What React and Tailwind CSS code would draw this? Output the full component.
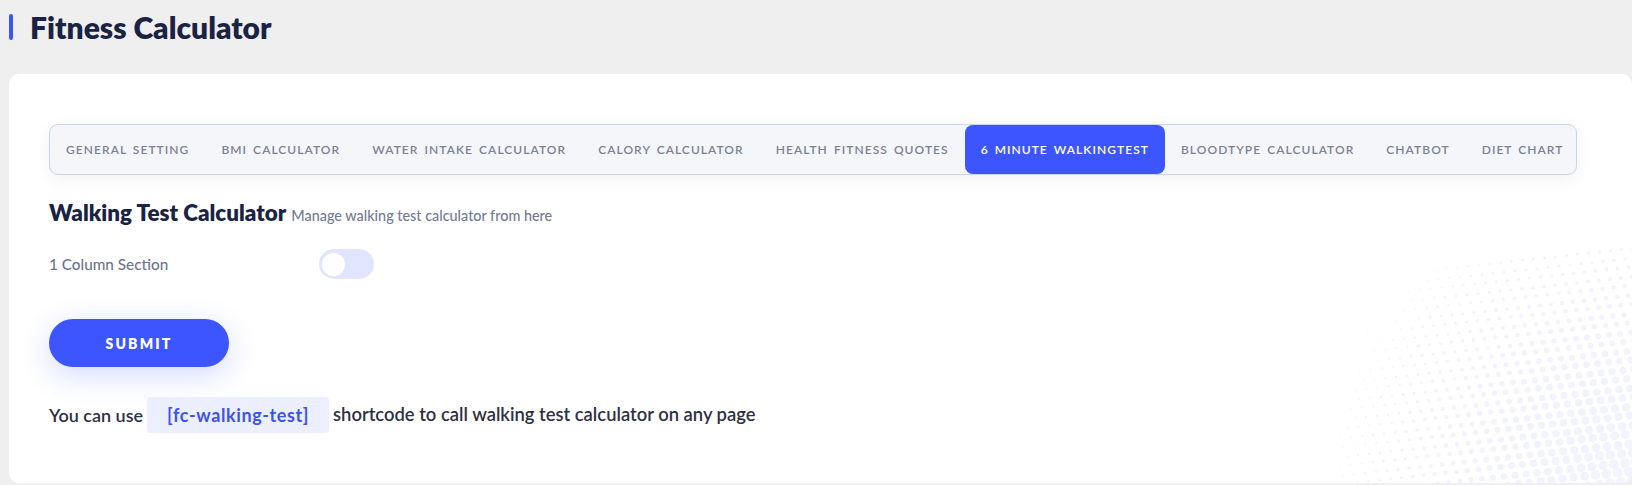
import React from "react";

const tabs = [
  "GENERAL SETTING",
  "BMI CALCULATOR",
  "WATER INTAKE CALCULATOR",
  "CALORY CALCULATOR",
  "HEALTH FITNESS QUOTES",
  "6 MINUTE WALKINGTEST",
  "BLOODTYPE CALCULATOR",
  "CHATBOT",
  "DIET CHART",
];

function Dots() {
  const W = 330;
  const H = 235;
  const circles = [];
  const sp = 11;
  for (let j = 0; j < 26; j++) {
    for (let i = 0; i < 36; i++) {
      const x = W - i * sp - (j % 2) * (sp / 2) + j * 2;
      const y = H - 2 - j * 9.5 + i * 1.2;
      const dx = W - x;
      const dy = H - y;
      const d = Math.sqrt(dx * dx + dy * dy);
      const r = 5.2 * (1 - d / 340);
      if (r > 0.4 && x > -5 && y > -5) {
        circles.push(<circle key={i + "-" + j} cx={x} cy={y} r={r} />);
      }
    }
  }
  return (
    <svg
      width={W}
      height={H}
      viewBox={`0 0 ${W} ${H}`}
      className="absolute right-0 bottom-0 pointer-events-none"
      fill="#f2f3fe"
    >
      {circles}
    </svg>
  );
}

export default function App() {
  return (
    <div
      className="w-[1632px] h-[485px] bg-[#efefef] overflow-hidden"
      style={{ fontFamily: "Lato, 'Noto Sans', sans-serif" }}
    >
      <div className="flex items-start pl-[9px] pt-[14px] h-[74px]">
        <div className="w-[4px] h-[26px] bg-[#3d55fb] rounded-full" />
        <h1 className="ml-[17px] text-[30px] leading-[26px] font-extrabold text-[#1b2345] tracking-[0px]">
          Fitness Calculator
        </h1>
      </div>
      <div className="relative ml-[9px] w-[1623px] h-[409px] bg-white rounded-[10px] overflow-hidden pl-[40px] pr-[55px] pt-[50px]">
        <Dots />
        <div className="relative flex justify-between items-stretch h-[51px] bg-[#f4f6fa] border border-[#c8d5ea] rounded-[9px] shadow-[0_4px_18px_rgba(0,0,0,0.06)]">
          {tabs.map((t) => {
            const active = t === "6 MINUTE WALKINGTEST";
            return (
              <div
                key={t}
                className={
                  "flex items-center px-[16px] text-[12px] font-semibold tracking-[1.05px] [word-spacing:2px] whitespace-nowrap " +
                  (active
                    ? "bg-[#3c55ff] text-white rounded-[8px]"
                    : "text-[#7c8196]")
                }
              >
                {t}
              </div>
            );
          })}
        </div>

        <div className="relative flex items-baseline mt-[24px]">
          <h2 className="text-[22.4px] font-extrabold text-[#1b2345] leading-[28px]">
            Walking Test Calculator
          </h2>
          <span className="ml-[5px] text-[14.4px] font-medium text-[#737b94]">
            Manage walking test calculator from here
          </span>
        </div>

        <div className="relative flex items-center mt-[22px] h-[30px]">
          <span className="w-[270px] text-[15.3px] text-[#6e7491] font-medium">
            1 Column Section
          </span>
          <div className="w-[55px] h-[30px] rounded-full bg-[#e1e5fd] flex items-center px-[3px]">
            <div className="w-[23px] h-[23px] rounded-full bg-white" />
          </div>
        </div>

        <button className="relative mt-[40px] w-[180px] h-[48px] rounded-full bg-[#3c55ff] text-white text-[14px] font-extrabold tracking-[2.2px] shadow-[0_8px_30px_rgba(60,85,255,0.22)] block">
          SUBMIT
        </button>

        <div className="relative flex items-center mt-[30px] text-[18px] font-semibold text-[#2f3142]">
          <span>You can use</span>
          <span className="ml-[4px] mr-[4px] h-[36px] px-[20px] flex items-center bg-[#ecefff] rounded-[4px] text-[#3d52f0] font-bold tracking-[0.6px]">
            [fc-walking-test]
          </span>
          <span className="text-[18.4px]">shortcode to call walking test calculator on any page</span>
        </div>
      </div>
    </div>
  );
}
